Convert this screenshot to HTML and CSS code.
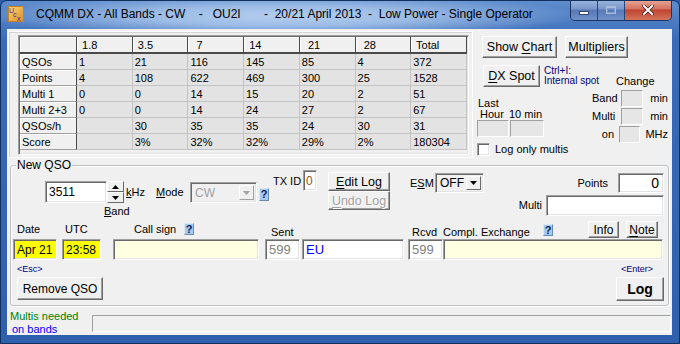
FILE: index.html
```html
<!DOCTYPE html>
<html lang="en">
<head>
  <meta charset="UTF-8" />
  <title>CQMM DX - All Bands - CW</title>
  <link rel="stylesheet" href="styles.css">
</head>
<body>
<div class="window">
  <!-- Title bar -->
  <div class="titlebar">
    <svg class="app-icon" width="16" height="16" viewBox="0 0 16 16">
      <defs>
        <linearGradient id="ig" x1="0" y1="0" x2="1" y2="1">
          <stop offset="0" stop-color="#f8d870"/>
          <stop offset="1" stop-color="#e08a2a"/>
        </linearGradient>
      </defs>
      <rect x="0.5" y="0.5" width="15" height="15" fill="url(#ig)" stroke="#c08030"/>
      <text x="1" y="7" font-size="7" font-family="Liberation Sans" fill="#50208a">U</text>
      <text x="5" y="11" font-size="7" font-family="Liberation Sans" fill="#50208a">c</text>
      <text x="9" y="15" font-size="7" font-family="Liberation Sans" fill="#50208a">x</text>
    </svg>
    <div class="title-text">CQMM DX - All Bands - CW    -   OU2I       -  20/21 April 2013  -  Low Power - Single Operator</div>
    <div class="caption-btns">
      <div class="cap-btn cap-min"><span class="min-glyph"></span></div>
      <div class="cap-btn cap-max"><span class="max-glyph"></span></div>
      <div class="cap-btn cap-close">
        <svg width="12" height="10" viewBox="0 0 12 10">
          <path d="M2 1 L10 9 M10 1 L2 9" stroke="#3a1a1a" stroke-width="3.4" stroke-linecap="square"/>
          <path d="M2 1 L10 9 M10 1 L2 9" stroke="#fff" stroke-width="2" stroke-linecap="square"/>
        </svg>
      </div>
    </div>
  </div>

  <div class="client">
    <!-- Totals and side tools -->
    <div class="top-section">
      <div class="stats-frame">
        <div class="grid-wrap">
          <table class="stats">
            <tr class="head"><th class="corner"></th><th> 1.8</th><th> 3.5</th><th>  7</th><th> 14</th><th>  21</th><th>  28</th><th> Total</th></tr>
            <tr><th>QSOs</th><td>1</td><td>21</td><td>116</td><td>145</td><td>85</td><td>4</td><td>372</td></tr>
            <tr><th>Points</th><td>4</td><td>108</td><td>622</td><td>469</td><td>300</td><td>25</td><td>1528</td></tr>
            <tr><th>Multi 1</th><td>0</td><td>0</td><td>14</td><td>15</td><td>20</td><td>2</td><td>51</td></tr>
            <tr><th>Multi 2+3</th><td>0</td><td>0</td><td>14</td><td>24</td><td>27</td><td>2</td><td>67</td></tr>
            <tr><th>QSOs/h</th><td></td><td>30</td><td>35</td><td>35</td><td>24</td><td>30</td><td>31</td></tr>
            <tr><th>Score</th><td></td><td>3%</td><td>32%</td><td>32%</td><td>29%</td><td>2%</td><td>180304</td></tr>
          </table>
        </div>
      </div>

      <div class="side-panel">
        <div class="side-buttons">
          <button class="btn btn-chart">Show <u>C</u>hart</button>
          <button class="btn btn-multi">Multi<u>p</u>liers</button>
        </div>
        <div class="side-cols">
          <div class="side-left">
            <div class="dx-row">
              <button class="btn btn-dx"><u>D</u>X Spot</button>
              <div class="hint">Ctrl+I:<br>Internal spot</div>
            </div>
            <div class="last-label">Last</div>
            <div class="hour-row"><span class="hour">Hour</span><span>10 min</span></div>
            <div class="rate-boxes"><div class="well rate1"></div><div class="well rate2"></div></div>
          </div>
          <div class="side-right">
            <div class="change-label">Change</div>
            <div class="chg-row"><span class="chg-label">Band</span><div class="well chg-box"></div><span class="chg-unit">min</span></div>
            <div class="chg-row"><span class="chg-label">Multi</span><div class="well chg-box"></div><span class="chg-unit">min</span></div>
            <div class="chg-row"><span class="chg-label on">on</span><div class="well chg-box"></div><span class="chg-unit mhz">MHz</span></div>
          </div>
        </div>
        <div class="check-row"><span class="checkbox"></span>Log only multis</div>
      </div>
    </div>

    <!-- New QSO group -->
    <div class="group">
      <div class="group-title">New QSO</div>

      <div class="row-a">
        <div class="freq-block">
          <div class="freq-line">
            <div class="edit freq">3511</div>
            <div class="spin">
              <div class="spin-btn"><svg width="7" height="4" viewBox="0 0 7 4"><path d="M3.5 0 L7 4 L0 4 Z" fill="#000"/></svg></div>
              <div class="spin-btn"><svg width="7" height="4" viewBox="0 0 7 4"><path d="M0 0 L7 0 L3.5 4 Z" fill="#000"/></svg></div>
            </div>
            <span class="khz"><u>k</u>Hz</span>
          </div>
          <div class="band-label"><u>B</u>and</div>
        </div>
        <div class="mode-label"><u>M</u>ode</div>
        <div class="combo combo-mode">
          <span class="combo-text">CW</span>
          <span class="combo-arrow"><svg width="7" height="4" viewBox="0 0 7 4"><path d="M0 0 L7 0 L3.5 4 Z" fill="#a0a0a0"/></svg></span>
        </div>
        <div class="help help-mode">?</div>
        <div class="txid-label">TX ID</div>
        <div class="edit txid">0</div>
        <div class="log-btns">
          <button class="btn btn-edit"><u>E</u>dit Log</button>
          <button class="btn btn-undo" disabled><u>U</u>ndo Log</button>
        </div>
        <div class="esm-label">E<u>S</u>M</div>
        <div class="combo combo-esm">
          <span class="combo-text">OFF</span>
          <span class="combo-arrow"><svg width="7" height="4" viewBox="0 0 7 4"><path d="M0 0 L7 0 L3.5 4 Z" fill="#000"/></svg></span>
        </div>
        <div class="score-col">
          <div class="points-row"><span>Points</span><div class="edit points">0</div></div>
          <div class="multi-row"><span>Multi</span><div class="edit multi"></div></div>
        </div>
      </div>

      <div class="row-b">
        <span class="lb-date">Date</span>
        <span class="lb-utc">UTC</span>
        <span class="lb-call">Call sign</span>
        <div class="help help-call">?</div>
        <span class="lb-sent">Sent</span>
        <span class="lb-rcvd">Rcvd</span>
        <span class="lb-exch">Compl. Exchange</span>
        <div class="help help-exch">?</div>
        <button class="btn btn-small btn-info">Info</button>
        <button class="btn btn-small btn-note"><u>N</u>ote</button>
      </div>

      <div class="row-c">
        <div class="edit f-date">Apr 21</div>
        <div class="edit f-utc">23:58</div>
        <div class="edit f-call"></div>
        <div class="edit f-sent">599</div>
        <div class="edit f-eu">EU</div>
        <div class="edit f-rcvd">599</div>
        <div class="edit f-exch"></div>
      </div>

      <div class="row-d">
        <div class="remove-col">
          <div class="key-hint">&lt;Esc&gt;</div>
          <button class="btn btn-remove">Remove QSO</button>
        </div>
        <div class="log-col">
          <div class="key-hint enter">&lt;Enter&gt;</div>
          <button class="btn btn-log">Log</button>
        </div>
      </div>
    </div>

    <!-- Status line -->
    <div class="status">
      <div class="status-text">
        <div class="needed">Multis needed</div>
        <div class="on-bands">on bands</div>
      </div>
      <div class="status-field"></div>
    </div>
  </div>
</div>
</body>
</html>
```

FILE: styles.css
```css
* {
  box-sizing: border-box;
}
body {
  margin: 0;
  font-family: "Liberation Sans", Arial, sans-serif;
  font-size: 11px;
  color: #000;
  background: #2c5daa;
}
.window {
  width: 680px;
  height: 344px;
  border: 1px solid #12305e;
  border-radius: 7px 7px 0 0;
  background: linear-gradient(to bottom, #5e8ccc 0, #3a6bb8 40px, #2f60ae 100%);
  display: flex;
  flex-direction: column;
  overflow: hidden;
}

/* title bar */
.titlebar {
  height: 28px;
  flex: none;
  display: flex;
  align-items: center;
  padding: 0 7px 2px 7px;
  background: radial-gradient(ellipse 300px 22px at 280px 15px, #b4cdee 0%, #9cbce6 45%, rgba(80,125,195,0) 100%);
}
.app-icon {
  flex: none;
}
.title-text {
  margin-left: 12px;
  font-size: 12px;
  white-space: pre;
  color: #000;
}
.caption-btns {
  margin-left: auto;
  align-self: flex-start;
  margin-top: -1px;
  display: flex;
  height: 21px;
  border: 1px solid #1a3260;
  border-top: none;
  border-radius: 0 0 5px 5px;
  overflow: hidden;
}
.cap-btn {
  display: flex;
  align-items: center;
  justify-content: center;
  height: 100%;
  border-right: 1px solid #2a4678;
}
.cap-min, .cap-max {
  width: 27px;
  background: linear-gradient(to bottom, #9ab4dc 0, #7a98cc 45%, #5778b4 50%, #6f90c8 100%);
}
.cap-close {
  width: 46px;
  border-right: none;
  background: linear-gradient(to bottom, #e6a898 0, #d3705e 45%, #c04430 50%, #d2745e 100%);
}
.min-glyph {
  width: 10px;
  height: 4px;
  margin-top: 6px;
  background: #fff;
  border: 1px solid #34496e;
}
.max-glyph {
  width: 10px;
  height: 8px;
  border: 1px solid #a8bcdc;
  border-top-width: 2px;
  box-shadow: inset 0 0 0 1px #7f9acb;
}

/* client area */
.client {
  flex: none;
  height: 306px;
  margin: 0 7px 8px 6px;
  background: #f0f0f0;
  display: flex;
  flex-direction: column;
}
.top-section {
  height: 136px;
  flex: none;
  display: flex;
  align-items: flex-start;
}
.stats-frame {
  margin: 2px 0 0 1px;
  width: 465px;
  height: 127px;
  border: 1px solid #fff;
  box-shadow: inset 1px 1px 0 #d4d4d4;
}
.grid-wrap {
  margin: 3px 0 0 9px;
  width: 451px;
  height: 120px;
  padding: 1px;
  border: 1px solid;
  border-color: #a0a0a0 #fff #fff #a0a0a0;
  box-shadow: inset 1px 1px 0 #696969, inset -1px -1px 0 #e3e3e3;
  background: #f0f0f0;
}
.stats {
  width: 447px;
  table-layout: fixed;
  border-collapse: separate;
  border-spacing: 0;
  font-size: 11px;
}
.stats th, .stats td {
  height: 16px;
  padding: 0 2px;
  text-align: left;
  font-weight: normal;
  white-space: pre;
  line-height: 14px;
  overflow: hidden;
}
.stats th {
  background: #f0f0f0;
  border-right: 1px solid #4a4a4a;
  border-bottom: 1px solid #a0a0a0;
  box-shadow: inset 1px 1px 0 #fff;
}
.stats tr.head th {
  height: 17px;
  border-bottom: 2px solid #4a4a4a;
}
.stats th.corner {
  width: 57px;
}
.stats td {
  background: #e3e3e3;
  border-right: 1px solid #c4c4c4;
  border-bottom: 1px solid #c4c4c4;
}

/* side panel */
.side-panel {
  margin: 7px 0 0 4px;
  width: 191px;
}
.btn {
  font-family: "Liberation Sans", Arial, sans-serif;
  font-size: 12.5px;
  color: #000;
  background: #f0f0f0;
  border: 1px solid;
  border-color: #fff #696969 #696969 #fff;
  box-shadow: inset -1px -1px 0 #a0a0a0;
  padding: 0;
  margin: 0;
  display: block;
  text-align: center;
  white-space: nowrap;
  flex: none;
}
.btn u {
  text-decoration-thickness: 1px;
  text-underline-offset: 2px;
}
.side-buttons {
  display: flex;
}
.btn-chart {
  margin-left: 5px;
  width: 75px;
  height: 22px;
}
.btn-multi {
  margin-left: 8px;
  width: 63px;
  height: 22px;
}
.side-cols {
  display: flex;
  height: 85px;
}
.side-left {
  width: 115px;
  flex: none;
}
.dx-row {
  display: flex;
  margin-top: 7px;
}
.btn-dx {
  margin-left: 6px;
  width: 57px;
  height: 22px;
}
.hint {
  margin: 1px 0 0 4px;
  font-size: 10px;
  line-height: 10px;
  color: #000080;
  white-space: nowrap;
}
.last-label {
  margin: 11px 0 0 1px;
  line-height: 11px;
}
.hour-row {
  display: flex;
  line-height: 11px;
}
.hour {
  margin-left: 3px;
  width: 29px;
}
.well {
  border: 1px solid;
  border-color: #a0a0a0 #fff #fff #a0a0a0;
  background: #e6e6e6;
}
.rate-boxes {
  display: flex;
}
.rate1 {
  width: 32px;
  height: 17px;
}
.rate2 {
  margin-left: 1px;
  width: 34px;
  height: 17px;
}
.side-right {
  width: 76px;
  flex: none;
}
.change-label {
  margin: 18px 0 4px 24px;
  line-height: 10px;
}
.chg-row {
  display: flex;
  height: 17px;
  line-height: 17px;
  margin-bottom: 1px;
}
.chg-label {
  width: 29px;
  padding-right: 9px;
  text-align: right;
}
.chg-label.on {
  padding-right: 5px;
}
.chg-box {
  width: 23px;
  height: 17px;
}
.chg-unit {
  margin-left: 7px;
}
.chg-unit.mhz {
  margin-left: 5px;
}
.check-row {
  display: flex;
  align-items: center;
  line-height: 13px;
}
.checkbox {
  width: 13px;
  height: 13px;
  margin-right: 5px;
  background: #fff;
  border: 1px solid;
  border-color: #a0a0a0 #fff #fff #a0a0a0;
  box-shadow: inset 1px 1px 0 #696969, inset -1px -1px 0 #e3e3e3;
}

/* group box */
.group {
  margin-left: 3px;
  width: 659px;
  height: 141px;
  flex: none;
  border: 1px solid #c0c0c0;
  border-radius: 3px;
  box-shadow: inset 1px 1px 0 #fff, 1px 1px 0 #fff;
  display: flex;
  flex-direction: column;
}
.group-title {
  margin: -7px 0 0 5px;
  padding: 0 1px;
  height: 13px;
  line-height: 13px;
  font-size: 12px;
  background: #f0f0f0;
  width: fit-content;
}
.edit {
  border: 1px solid;
  border-color: #a0a0a0 #fff #fff #a0a0a0;
  box-shadow: inset 1px 1px 0 #696969, inset -1px -1px 0 #e3e3e3;
  background: #fff;
  font-size: 12px;
  padding: 0 3px;
  display: flex;
  align-items: center;
  flex: none;
  white-space: nowrap;
  overflow: hidden;
}
.row-a {
  height: 49px;
  flex: none;
  display: flex;
  align-items: flex-start;
}
.freq-block {
  margin: 9px 0 0 34px;
  width: 111px;
  flex: none;
}
.freq-line {
  display: flex;
  height: 22px;
}
.freq {
  width: 62px;
  height: 22px;
}
.spin {
  width: 17px;
  height: 22px;
  display: flex;
  flex-direction: column;
}
.spin-btn {
  height: 11px;
  background: #f0f0f0;
  border: 1px solid;
  border-color: #fff #696969 #696969 #fff;
  display: flex;
  align-items: center;
  justify-content: center;
}
.khz {
  margin-left: 2px;
  line-height: 22px;
}
.band-label {
  margin: 1px 0 0 59px;
  line-height: 14px;
}
.mode-label {
  margin-top: 9px;
  width: 34px;
  line-height: 22px;
  flex: none;
}
.combo {
  display: flex;
  align-items: center;
  flex: none;
  border: 1px solid;
  border-color: #a0a0a0 #fff #fff #a0a0a0;
  box-shadow: inset 1px 1px 0 #696969, inset -1px -1px 0 #e3e3e3;
  padding: 2px;
  font-size: 12px;
}
.combo-text {
  flex: 1;
  padding-left: 2px;
}
.combo-arrow {
  width: 15px;
  height: 100%;
  display: flex;
  align-items: center;
  justify-content: center;
  background: #f0f0f0;
  border: 1px solid;
  border-color: #fff #696969 #696969 #fff;
}
.combo-mode {
  margin-top: 10px;
  width: 67px;
  height: 21px;
  background: #f0f0f0;
  color: #a0a0a0;
}
.combo-mode .combo-arrow {
  border-color: #fff #a0a0a0 #a0a0a0 #fff;
}
.help {
  width: 10px;
  height: 13px;
  flex: none;
  background: #a6caf0;
  border: 1px solid;
  border-color: #d8e8f8 #6a8ab0 #6a8ab0 #d8e8f8;
  font-size: 11px;
  font-weight: bold;
  line-height: 11px;
  text-align: center;
  color: #10205a;
}
.help-mode {
  margin: 16px 0 0 2px;
}
.txid-label {
  margin: 2px 0 0 4px;
  width: 30px;
  line-height: 14px;
  flex: none;
}
.txid {
  margin-top: -2px;
  width: 14px;
  height: 21px;
  padding: 0 2px;
  color: #a05010;
}
.log-btns {
  margin-left: 11px;
  width: 62px;
  flex: none;
}
.btn-edit, .btn-undo {
  width: 62px;
  height: 19px;
}
.btn-undo {
  color: #a0a0a0;
  text-shadow: 1px 1px 0 #fff;
}
.esm-label {
  margin: 1px 0 0 20px;
  width: 25px;
  line-height: 20px;
  flex: none;
}
.combo-esm {
  margin-top: 1px;
  width: 49px;
  height: 20px;
  background: #f0f0f0;
}
.score-col {
  margin: 1px 4px 0 auto;
  width: 146px;
  flex: none;
}
.points-row, .multi-row {
  display: flex;
  justify-content: flex-end;
}
.points-row span {
  line-height: 20px;
  margin-right: 10px;
}
.points {
  width: 46px;
  height: 20px;
  justify-content: flex-end;
  font-size: 14px;
  padding-right: 4px;
}
.multi-row {
  margin-top: 2px;
}
.multi-row span {
  line-height: 21px;
  margin-right: 4px;
}
.multi {
  width: 118px;
  height: 21px;
}
.row-b {
  height: 17px;
  flex: none;
  display: flex;
  align-items: flex-start;
}
.row-b span {
  flex: none;
  white-space: nowrap;
}
.lb-date {
  margin-left: 6px;
  width: 48px;
  line-height: 17px;
}
.lb-utc {
  width: 69px;
  line-height: 17px;
}
.lb-call {
  width: 50px;
  line-height: 17px;
}
.help-call {
  margin-top: 2px;
  height: 12px;
}
.lb-sent, .lb-rcvd, .lb-exch {
  margin-top: 4px;
  line-height: 14px;
}
.lb-sent {
  margin-left: 77px;
  width: 141px;
}
.lb-rcvd {
  width: 31px;
}
.lb-exch {
  width: 100px;
}
.help-exch {
  margin-top: 3px;
  height: 12px;
}
.btn-small {
  height: 17px;
  font-size: 12px;
}
.btn-info {
  margin-left: 35px;
  width: 31px;
}
.btn-note {
  margin-left: 7px;
  width: 32px;
}
.row-c {
  margin-top: 1px;
  height: 21px;
  flex: none;
  display: flex;
}
.row-c .edit {
  height: 21px;
}
.f-date {
  margin-left: 2px;
  width: 44px;
  background: #ffff00;
}
.f-utc {
  margin-left: 5px;
  width: 39px;
  background: #ffff00;
}
.f-call {
  margin-left: 12px;
  width: 146px;
  background: #ffffe1;
}
.f-sent {
  margin-left: 6px;
  width: 35px;
  color: #808080;
  font-size: 13px;
}
.f-eu {
  margin-left: 2px;
  width: 102px;
  color: #0000ff;
  font-size: 13px;
}
.f-rcvd {
  margin-left: 4px;
  width: 35px;
  color: #808080;
  font-size: 13px;
}
.f-exch {
  width: 220px;
  background: #ffffe1;
}
.row-d {
  flex: 1;
  display: flex;
  justify-content: space-between;
}
.remove-col {
  margin-left: 6px;
}
.key-hint {
  margin-top: 3px;
  font-size: 9px;
  line-height: 12px;
  color: #000080;
}
.key-hint.enter {
  padding-left: 5px;
}
.btn-remove {
  margin-top: 2px;
  width: 86px;
  height: 23px;
  font-size: 12px;
}
.log-col {
  margin-right: 4px;
}
.btn-log {
  margin-top: 2px;
  width: 48px;
  height: 24px;
  font-size: 14px;
  font-weight: bold;
}

/* status line */
.status {
  flex: 1;
  display: flex;
}
.status-text {
  width: 85px;
  flex: none;
  padding: 4px 0 0 3px;
  line-height: 13px;
  font-size: 11px;
}
.needed {
  color: #008000;
}
.on-bands {
  padding-left: 2px;
  color: #0000ff;
}
.status-field {
  margin-top: 9px;
  width: 579px;
  height: 17px;
  border: 1px solid;
  border-color: #a0a0a0 #fff #fff #a0a0a0;
}
```
